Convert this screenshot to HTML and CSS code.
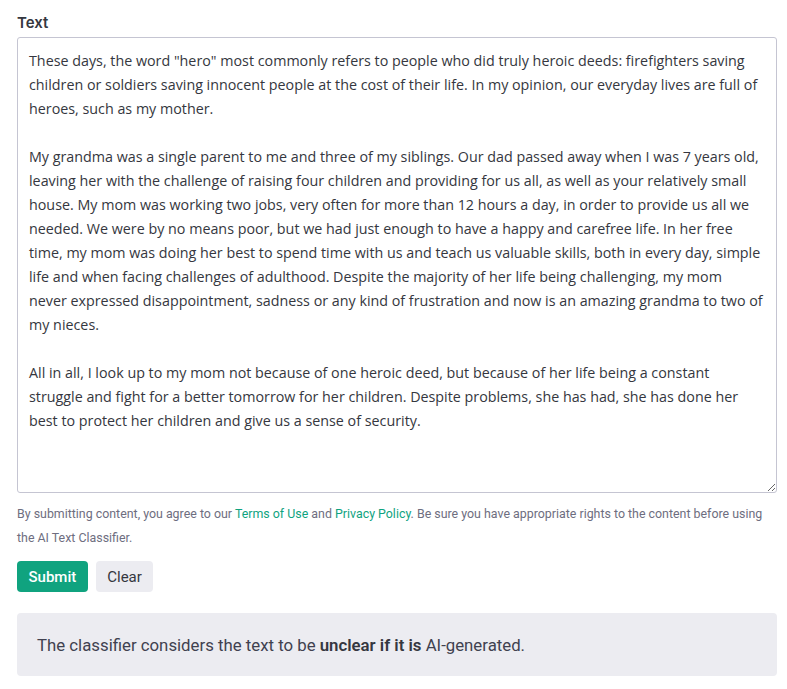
FILE: index.html
```html
<!DOCTYPE html>
<html>
<head>
<meta charset="utf-8">
<link rel="stylesheet" href="styles.css">
</head>
<body>
<main class="page">
  <label class="label" for="txt">Text</label>
  <textarea id="txt" class="input">These days, the word "hero" most commonly refers to people who did truly heroic deeds: firefighters saving children or soldiers saving innocent people at the cost of their life. In my opinion, our everyday lives are full of heroes, such as my mother.

My grandma was a single parent to me and three of my siblings. Our dad passed away when I was 7 years old, leaving her with the challenge of raising four children and providing for us all, as well as your relatively small house. My mom was working two jobs, very often for more than 12 hours a day, in order to provide us all we needed. We were by no means poor, but we had just enough to have a happy and carefree life. In her free time, my mom was doing her best to spend time with us and teach us valuable skills, both in every day, simple life and when facing challenges of adulthood. Despite the majority of her life being challenging, my mom never expressed disappointment, sadness or any kind of frustration and now is an amazing grandma to two of my nieces.

All in all, I look up to my mom not because of one heroic deed, but because of her life being a constant struggle and fight for a better tomorrow for her children. Despite problems, she has had, she has done her best to protect her children and give us a sense of security.</textarea>
  <p class="note">By submitting content, you agree to our <a href="#">Terms of Use</a> and <a href="#">Privacy Policy</a>. Be sure you have appropriate rights to the content before using the AI Text Classifier.</p>
  <div class="actions">
    <button class="btn btn-primary">Submit</button>
    <button class="btn btn-secondary">Clear</button>
  </div>
  <div class="result"><span>The classifier considers the text to be <strong>unclear if it is</strong> AI-generated.</span></div>
</main>
</body>
</html>
```
FILE: styles.css
```css
* { box-sizing: border-box; }
html, body { margin: 0; padding: 0; background: #fff; }
body { font-family: Roboto, "Liberation Sans", sans-serif; color: #353740; }
.page {
  width: 760px;
  margin-left: 17px;
  padding-top: 13px;
  display: flex;
  flex-direction: column;
}
.label {
  font-family: Inter, Roboto, sans-serif;
  font-weight: 600;
  font-size: 15px;
  line-height: 20px;
  color: #353740;
  margin-bottom: 4px;
}
.input {
  display: block;
  width: 760px;
  height: 456px;
  margin: 0;
  border: 1px solid #c5c5d2;
  border-radius: 3px;
  padding: 11px 13px 11px 11px;
  font-family: "Open Sans", "Noto Sans", sans-serif;
  font-size: 14.3px;
  line-height: 24px;
  color: #353740;
  resize: vertical;
  background: #fff;
  outline: none;
}
.note {
  margin: 9px 0 0 0;
  font-size: 12.4px;
  line-height: 24px;
  color: #6e6e80;
}
.note a { color: #10a37f; text-decoration: none; }
.actions {
  display: flex;
  gap: 8px;
  margin-top: 11px;
}
.btn {
  border: 0;
  border-radius: 4px;
  height: 31px;
  padding: 0 11.5px;
  font-family: Roboto, "Liberation Sans", sans-serif;
  font-size: 15px;
  cursor: pointer;
}
.btn-primary { background: #10a37f; color: #fff; font-weight: 500; }
.btn-secondary { background: #ececf1; color: #353740; }
.result {
  margin-top: 21px;
  background: #ececf1;
  border-radius: 4px;
  height: 63px;
  padding: 0 20px;
  display: flex;
  align-items: center;
  font-size: 16.8px;
  color: #40414f;
}
.result strong { font-weight: 600; color: #353740; }
```
